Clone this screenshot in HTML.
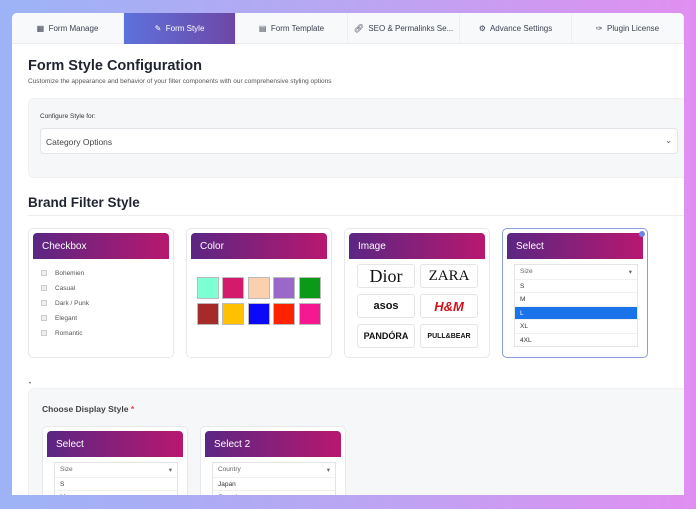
<!DOCTYPE html>
<html><head><style>
*{box-sizing:border-box;margin:0;padding:0}
body{width:696px;height:509px;overflow:hidden;font-family:"Liberation Sans",sans-serif;background:linear-gradient(90deg,#9db3f6 0%,#b9a6f2 50%,#e08ff0 100%);position:relative}
.card{position:absolute;left:12px;top:13px;width:672px;height:482px;background:#fff;border-radius:5px 5px 0 0;overflow:hidden}
.tabs{position:absolute;left:0;top:0;width:672px;height:31px;background:#f8f9fa;border-bottom:1px solid #eceef1;display:flex}
.tab{width:115px;height:31px;display:flex;align-items:center;justify-content:center;font-size:8px;color:#3c4250;border-right:1px solid #eceef1;white-space:nowrap}
.tab.act{background:linear-gradient(90deg,#5d72dc,#6e47a6);color:#fff}
.abs{position:absolute}
h1{position:absolute;left:16px;top:45px;font-size:14.5px;font-weight:bold;color:#1f2430}
.sub{left:16px;top:65px;font-size:6.5px;color:#555}
.cfg{left:16px;top:85px;width:660px;height:80px;background:#f6f7f9;border-radius:6px;border:1px solid #eef0f3}
.sel{left:28px;top:115px;width:638px;height:26px;background:#fff;border:1px solid #e2e5ea;border-radius:4px;font-size:8.5px;color:#444;padding:8px 5px}
h2{position:absolute;left:16px;top:182px;font-size:13.5px;font-weight:bold;color:#1f2430}
.hr{left:16px;top:202px;width:660px;height:1px;background:#eceef1}
.fc{position:absolute;width:146px;height:130px;background:#fff;border:1px solid #e6e8ec;border-radius:5px}
.fh{position:absolute;left:4px;top:4px;width:136px;height:26px;background:linear-gradient(90deg,#5b2683,#b8186f);border-radius:4px 4px 0 0;color:#fff;font-size:10px;padding:8px 9px}
.ck{position:absolute;left:12px;font-size:6.5px;color:#555}
.ck i{display:inline-block;width:6px;height:6px;border:1px solid #ccc;background:#eee;margin-right:8px;vertical-align:middle}
.sw{position:absolute;width:22px;height:22px;border:1px solid #bbb}
.lg{position:absolute;width:58px;height:24px;border:1px solid #e4e4e4;border-radius:3px;display:flex;align-items:center;justify-content:center;color:#111;font-weight:bold}
.dd{position:absolute;left:11px;width:124px;border:1px solid #e4e4e4;background:#fff;font-size:6.5px;color:#333}
.dd div{height:13.5px;padding:3px 5px;border-top:1px solid #f0f0f0}
.low{left:16px;top:375px;width:660px;height:120px;background:#f6f7f9;border:1px solid #eef0f3;border-radius:6px}
</style></head><body>
<div class="card">
<div class="tabs">
<div class="tab">▦&nbsp; Form Manage</div>
<div class="tab act">✎&nbsp; Form Style</div>
<div class="tab">▤&nbsp; Form Template</div>
<div class="tab">🔗︎&nbsp; SEO &amp; Permalinks Se...</div>
<div class="tab">⚙&nbsp; Advance Settings</div>
<div class="tab">✑&nbsp; Plugin License</div>
</div>
<h1>Form Style Configuration</h1>
<div class="abs sub">Customize the appearance and behavior of your filter components with our comprehensive styling options</div>
<div class="abs cfg"></div>
<div class="abs" style="left:28px;top:100px;font-size:6.5px;color:#333">Configure Style for:</div>
<div class="abs sel">Category Options<span style="position:absolute;right:5px;top:6px;color:#666">⌄</span></div>
<h2>Brand Filter Style</h2>
<div class="abs hr"></div>

<div class="fc" style="left:16px;top:215px"><div class="fh">Checkbox</div>
<div class="ck" style="top:41px"><i></i>Bohemien</div>
<div class="ck" style="top:56px"><i></i>Casual</div>
<div class="ck" style="top:71px"><i></i>Dark / Punk</div>
<div class="ck" style="top:86px"><i></i>Elegant</div>
<div class="ck" style="top:101px"><i></i>Romantic</div>
</div>
<div class="fc" style="left:174px;top:215px"><div class="fh">Color</div>
<div class="sw" style="left:10px;top:48px;background:#7fffd4"></div>
<div class="sw" style="left:35px;top:48px;background:#d41a6a"></div>
<div class="sw" style="left:61px;top:48px;background:#fbd0ae"></div>
<div class="sw" style="left:86px;top:48px;background:#9a68c8"></div>
<div class="sw" style="left:112px;top:48px;background:#0b9a18"></div>
<div class="sw" style="left:10px;top:74px;background:#a52a2a"></div>
<div class="sw" style="left:35px;top:74px;background:#ffc000"></div>
<div class="sw" style="left:61px;top:74px;background:#0a0af8"></div>
<div class="sw" style="left:86px;top:74px;background:#ff2200"></div>
<div class="sw" style="left:112px;top:74px;background:#f51890"></div>
</div>
<div class="fc" style="left:332px;top:215px"><div class="fh">Image</div>
<div class="lg" style="left:12px;top:35px;font-family:'Liberation Serif',serif;font-weight:normal;font-size:18px">Dior</div>
<div class="lg" style="left:75px;top:35px;font-family:'Liberation Serif',serif;font-weight:normal;font-size:15px">ZARA</div>
<div class="lg" style="left:12px;top:65px;font-size:11px">asos</div>
<div class="lg" style="left:75px;top:65px;color:#d0121b;font-style:italic;font-size:13px">H&amp;M</div>
<div class="lg" style="left:12px;top:95px;font-size:9px">PANDÓRA</div>
<div class="lg" style="left:75px;top:95px;font-size:7px">PULL&amp;BEAR</div>
</div>
<div class="fc" style="left:490px;top:215px;border:1.5px solid #8a9ce6"><div class="fh">Select</div>
<div style="position:absolute;right:2px;top:2px;width:6px;height:6px;border-radius:50%;background:#6d86e8"></div>
<div class="dd" style="top:35px">
<div style="border:0;color:#666">Size<span style="float:right">▾</span></div><div>S</div><div>M</div><div style="background:#1a73e8;color:#fff">L</div><div>XL</div><div>4XL</div>
</div></div>

<div class="abs" style="left:17px;top:368px;font-size:6px;color:#666">•</div>
<div class="abs low"></div>
<div class="abs" style="left:30px;top:391px;font-size:8.5px;font-weight:bold;color:#444">Choose Display Style <span style="color:#e04545">*</span></div>
<div class="fc" style="left:30px;top:413px;height:100px"><div class="fh">Select</div>
<div class="dd" style="top:35px"><div style="border:0;color:#666">Size<span style="float:right">▾</span></div><div>S</div><div>M</div></div></div>
<div class="fc" style="left:188px;top:413px;height:100px"><div class="fh">Select 2</div>
<div class="dd" style="top:35px"><div style="border:0;color:#666">Country<span style="float:right">▾</span></div><div>Japan</div><div>Canada</div></div></div>
</div>
</body></html>
